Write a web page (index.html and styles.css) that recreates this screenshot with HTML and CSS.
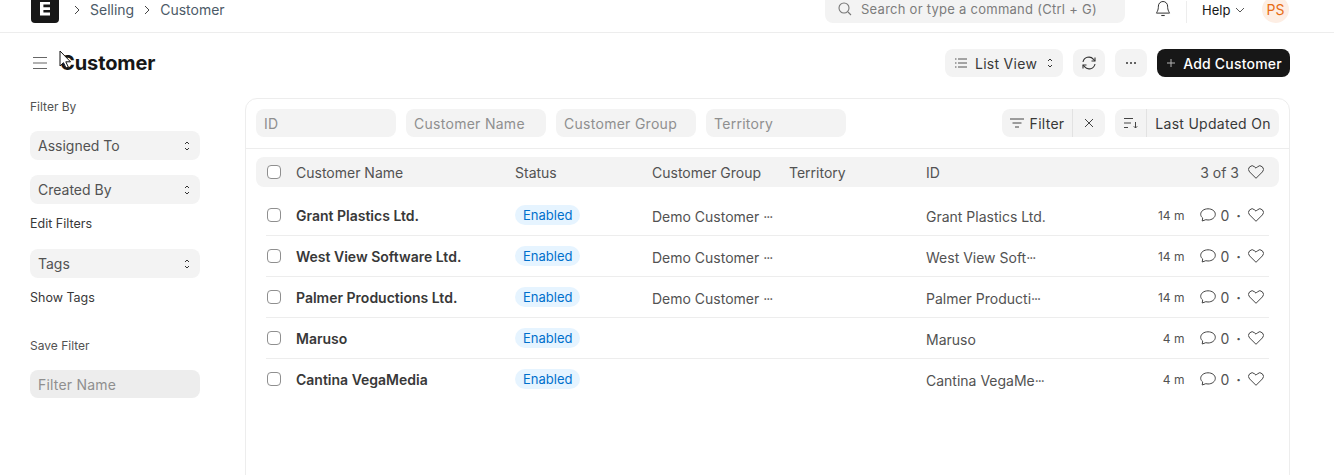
FILE: index.html
```html
<!DOCTYPE html>
<html lang="en">
<head>
<meta charset="utf-8">
<title>Customer</title>
<link rel="stylesheet" href="styles.css">
</head>
<body>
<header class="navbar">
  <div class="logo"><svg viewBox="0 0 28 28" width="28" height="28"><path d="M9 7h10v2.600h-6.600v2.600h6.600V15h-6.600v2.600H19v3H9z" fill="#fff"/></svg></div>
  <nav class="crumbs">
    <svg class="crumb-sep" viewBox="0 0 8 10" width="8" height="10"><path d="M2 1l4 4-4 4" fill="none" stroke="#444" stroke-width="1"/></svg>
    <span>Selling</span>
    <svg class="crumb-sep" viewBox="0 0 8 10" width="8" height="10"><path d="M2 1l4 4-4 4" fill="none" stroke="#444" stroke-width="1"/></svg>
    <span>Customer</span>
  </nav>
  <div class="search">
    <svg viewBox="0 0 16 16" width="16" height="16"><circle cx="7" cy="7" r="5" fill="none" stroke="#777" stroke-width="1.100"/><path d="M11 11l3 3" stroke="#777" stroke-width="1.100"/></svg>
    <span>Search or type a command (Ctrl + G)</span>
  </div>
  <svg class="bell" viewBox="0 0 16 18" width="16" height="18"><path d="M8 1.500a4.600 4.600 0 0 0-4.600 4.600c0 4.400-1.600 6-2 7h13.200c-.4-1-2-2.600-2-7A4.600 4.600 0 0 0 8 1.500z" fill="none" stroke="#333" stroke-width="1"/><path d="M6.300 15.500h3.400" stroke="#333" stroke-width="1.100"/></svg>
  <div class="vline"></div>
  <div class="help">Help <svg viewBox="0 0 10 6" width="10" height="6"><path d="M1 1l4 4 4-4" fill="none" stroke="#555" stroke-width="1"/></svg></div>
  <div class="avatar">PS</div>
</header>

<section class="page-head">
  <svg class="menu" viewBox="0 0 14 14" width="14" height="14"><path d="M0 1.500h14M0 7h14M0 12.500h14" stroke="#666" stroke-width="1.100"/></svg>
  <h1>Customer</h1>
  <div class="actions">
    <button class="btn list-view">
      <svg viewBox="0 0 12 10" width="12" height="10"><path d="M3 1h9M3 5h9M3 9h9M0 1h1.500M0 5h1.500M0 9h1.500" stroke="#555" stroke-width="1"/></svg>
      <span>List View</span>
      <svg class="stepper" viewBox="0 0 6 12" width="6" height="12"><path d="M1 4l2-2 2 2M1 8l2 2 2-2" fill="none" stroke="#333" stroke-width="1"/></svg>
    </button>
    <button class="btn icon-btn"><svg viewBox="0 0 16 16" width="16" height="16"><path d="M2 7a6 6 0 0 1 10.500-2.700L14 6M14 9a6 6 0 0 1-10.500 2.700L2 10" fill="none" stroke="#333" stroke-width="1.100"/><path d="M14 2.500V6h-3.500M2 13.500V10h3.500" fill="none" stroke="#333" stroke-width="1.100"/></svg></button>
    <button class="btn icon-btn"><svg viewBox="0 0 10 2" width="10" height="2"><circle cx="1" cy="1" r="1" fill="#333"/><circle cx="5" cy="1" r="1" fill="#333"/><circle cx="9" cy="1" r="1" fill="#333"/></svg></button>
    <button class="btn primary"><svg viewBox="0 0 8 8" width="8" height="8"><path d="M4 0v8M0 4h8" stroke="#b5b5b5" stroke-width="1"/></svg><span>Add Customer</span></button>
  </div>
</section>

<div class="layout">
  <aside class="sidebar">
    <div class="side-label first">Filter By</div>
    <div class="side-select">Assigned To <svg viewBox="0 0 6 12" width="6" height="12"><path d="M1 4l2-2 2 2M1 8l2 2 2-2" fill="none" stroke="#333" stroke-width="1"/></svg></div>
    <div class="side-select">Created By <svg viewBox="0 0 6 12" width="6" height="12"><path d="M1 4l2-2 2 2M1 8l2 2 2-2" fill="none" stroke="#333" stroke-width="1"/></svg></div>
    <div class="side-link">Edit Filters</div>
    <div class="side-select">Tags <svg viewBox="0 0 6 12" width="6" height="12"><path d="M1 4l2-2 2 2M1 8l2 2 2-2" fill="none" stroke="#333" stroke-width="1"/></svg></div>
    <div class="side-link">Show Tags</div>
    <div class="side-label save">Save Filter</div>
    <div class="side-input">Filter Name</div>
  </aside>

  <main class="card">
    <div class="filters">
      <div class="field">ID</div>
      <div class="field">Customer Name</div>
      <div class="field">Customer Group</div>
      <div class="field">Territory</div>
      <div class="tools">
        <div class="group">
          <div class="seg filter-seg"><svg viewBox="0 0 14 10" width="14" height="10"><path d="M0 1h14M2.500 5h9M5 9h4" stroke="#444" stroke-width="1"/></svg>Filter</div>
          <div class="seg x-seg"><svg viewBox="0 0 10 10" width="10" height="10"><path d="M1 1l8 8M9 1l-8 8" stroke="#444" stroke-width="1"/></svg></div>
        </div>
        <div class="group">
          <div class="seg sort-seg"><svg viewBox="0 0 14 12" width="14" height="12"><path d="M0 1.500h9M0 6h7M0 10.500h4" stroke="#444" stroke-width="1"/><path d="M11.500 5v6M9.800 9.300l1.700 1.700 1.700-1.700" fill="none" stroke="#444" stroke-width="1"/></svg></div>
          <div class="seg order-seg">Last Updated On</div>
        </div>
      </div>
    </div>

    <div class="head-row">
      <span class="check"></span>
      <span>Customer Name</span>
      <span>Status</span>
      <span>Customer Group</span>
      <span>Territory</span>
      <span>ID</span>
      <span class="meta">3 of 3 <svg class="heart" viewBox="0 0 16 14" width="16" height="14"><path d="M8 13.300L1.600 6.900a3.500 3.500 0 0 1 0-5 3.600 3.600 0 0 1 5.100 0L8 3.200l1.300-1.300a3.600 3.600 0 0 1 5.100 0 3.500 3.500 0 0 1 0 5z" fill="none" stroke="#444" stroke-width="1"/></svg></span>
    </div>

    <div class="row">
      <span class="check"></span>
      <span class="name">Grant Plastics Ltd.</span>
      <span><span class="pill">Enabled</span></span>
      <span class="cell">Demo Customer <span class="more">···</span></span>
      <span></span>
      <span class="cell">Grant Plastics Ltd.</span>
      <span class="meta"><span class="time">14 m</span><svg class="bubble" viewBox="0 0 16 14" width="16" height="14"><path d="M8 .8C3.900.8.700 3.200.700 6.300c0 1.500.8 2.800 2 3.700L2.200 13l3.600-1.300c.7.200 1.400.3 2.200.3 4.100 0 7.300-2.500 7.300-5.700S12.100.8 8 .8z" fill="none" stroke="#444" stroke-width="1"/></svg><span class="count">0</span><span class="sep">&middot;</span><svg class="heart" viewBox="0 0 16 14" width="16" height="14"><path d="M8 13.300L1.600 6.900a3.500 3.500 0 0 1 0-5 3.600 3.600 0 0 1 5.100 0L8 3.200l1.300-1.300a3.600 3.600 0 0 1 5.100 0 3.500 3.500 0 0 1 0 5z" fill="none" stroke="#444" stroke-width="1"/></svg></span>
    </div>
    <div class="row">
      <span class="check"></span>
      <span class="name">West View Software Ltd.</span>
      <span><span class="pill">Enabled</span></span>
      <span class="cell">Demo Customer <span class="more">···</span></span>
      <span></span>
      <span class="cell">West View Soft<span class="more">···</span></span>
      <span class="meta"><span class="time">14 m</span><svg class="bubble" viewBox="0 0 16 14" width="16" height="14"><path d="M8 .8C3.900.8.700 3.200.700 6.300c0 1.500.8 2.800 2 3.700L2.200 13l3.600-1.300c.7.200 1.400.3 2.200.3 4.100 0 7.300-2.500 7.300-5.700S12.100.8 8 .8z" fill="none" stroke="#444" stroke-width="1"/></svg><span class="count">0</span><span class="sep">&middot;</span><svg class="heart" viewBox="0 0 16 14" width="16" height="14"><path d="M8 13.300L1.600 6.900a3.500 3.500 0 0 1 0-5 3.600 3.600 0 0 1 5.100 0L8 3.200l1.300-1.300a3.600 3.600 0 0 1 5.100 0 3.500 3.500 0 0 1 0 5z" fill="none" stroke="#444" stroke-width="1"/></svg></span>
    </div>
    <div class="row">
      <span class="check"></span>
      <span class="name">Palmer Productions Ltd.</span>
      <span><span class="pill">Enabled</span></span>
      <span class="cell">Demo Customer <span class="more">···</span></span>
      <span></span>
      <span class="cell">Palmer Producti<span class="more">···</span></span>
      <span class="meta"><span class="time">14 m</span><svg class="bubble" viewBox="0 0 16 14" width="16" height="14"><path d="M8 .8C3.900.8.700 3.200.700 6.300c0 1.500.8 2.800 2 3.700L2.200 13l3.600-1.300c.7.200 1.400.3 2.200.3 4.100 0 7.300-2.500 7.300-5.700S12.100.8 8 .8z" fill="none" stroke="#444" stroke-width="1"/></svg><span class="count">0</span><span class="sep">&middot;</span><svg class="heart" viewBox="0 0 16 14" width="16" height="14"><path d="M8 13.300L1.600 6.900a3.500 3.500 0 0 1 0-5 3.600 3.600 0 0 1 5.100 0L8 3.200l1.300-1.300a3.600 3.600 0 0 1 5.100 0 3.500 3.500 0 0 1 0 5z" fill="none" stroke="#444" stroke-width="1"/></svg></span>
    </div>
    <div class="row">
      <span class="check"></span>
      <span class="name">Maruso</span>
      <span><span class="pill">Enabled</span></span>
      <span class="cell"></span>
      <span></span>
      <span class="cell">Maruso</span>
      <span class="meta"><span class="time">4 m</span><svg class="bubble" viewBox="0 0 16 14" width="16" height="14"><path d="M8 .8C3.900.8.700 3.200.700 6.300c0 1.500.8 2.800 2 3.700L2.200 13l3.600-1.300c.7.200 1.400.3 2.200.3 4.100 0 7.300-2.500 7.300-5.700S12.100.8 8 .8z" fill="none" stroke="#444" stroke-width="1"/></svg><span class="count">0</span><span class="sep">&middot;</span><svg class="heart" viewBox="0 0 16 14" width="16" height="14"><path d="M8 13.300L1.600 6.900a3.500 3.500 0 0 1 0-5 3.600 3.600 0 0 1 5.100 0L8 3.200l1.300-1.300a3.600 3.600 0 0 1 5.100 0 3.500 3.500 0 0 1 0 5z" fill="none" stroke="#444" stroke-width="1"/></svg></span>
    </div>
    <div class="row last">
      <span class="check"></span>
      <span class="name">Cantina VegaMedia</span>
      <span><span class="pill">Enabled</span></span>
      <span class="cell"></span>
      <span></span>
      <span class="cell">Cantina VegaMe<span class="more">···</span></span>
      <span class="meta"><span class="time">4 m</span><svg class="bubble" viewBox="0 0 16 14" width="16" height="14"><path d="M8 .8C3.900.8.700 3.200.700 6.300c0 1.500.8 2.800 2 3.700L2.200 13l3.600-1.300c.7.200 1.400.3 2.200.3 4.100 0 7.300-2.500 7.300-5.700S12.100.8 8 .8z" fill="none" stroke="#444" stroke-width="1"/></svg><span class="count">0</span><span class="sep">&middot;</span><svg class="heart" viewBox="0 0 16 14" width="16" height="14"><path d="M8 13.300L1.600 6.900a3.500 3.500 0 0 1 0-5 3.600 3.600 0 0 1 5.100 0L8 3.200l1.300-1.300a3.600 3.600 0 0 1 5.100 0 3.500 3.500 0 0 1 0 5z" fill="none" stroke="#444" stroke-width="1"/></svg></span>
    </div>
  </main>
</div>

<svg class="cursor" viewBox="0 0 12 20" width="12" height="20"><path d="M1 1v15l3.500-3.300L7 18l2.300-1-2.500-5.200H11.500z" fill="#fff" stroke="#111" stroke-width="1"/></svg>
</body>
</html>
```
FILE: styles.css
```css
* { box-sizing: border-box; }
html, body { margin: 0; height: 475px; overflow: hidden; background: #fff; }
body { font-family: Inter, "Liberation Sans", sans-serif; font-size: 14px; color: #383838; position: relative; }

.navbar { height: 33px; border-bottom: 1px solid #ededed; display: flex; align-items: flex-end; padding: 0 45px 9px 31px; overflow: hidden; }
.logo { width: 28px; height: 28px; flex: none; background: #171717; border-radius: 4px; }
.logo svg { display: block; }
.crumbs { display: flex; align-items: center; margin-left: 14px; height: 20px; color: #4c5a67; line-height: 20px; margin-bottom: 3px; }
.crumb-sep { margin-right: 9px; }
.crumbs span + .crumb-sep { margin-left: 9px; }
.search { margin-left: auto; width: 300px; height: 30px; background: #f3f3f3; border-radius: 8px; display: flex; align-items: center; gap: 8px; padding: 2px 12px 0; color: #7c7c7c; font-size: 13px; letter-spacing: .26px; }
.bell { margin-left: 30px; margin-bottom: 5px; flex: none; }
.vline { width: 1px; height: 22px; background: #ededed; margin-left: 15px; }
.help { margin-left: 15px; display: flex; align-items: center; gap: 5px; font-size: 13px; color: #171717; line-height: 18px; margin-bottom: 4px; width: 46px; }
.avatar { width: 27px; height: 27px; border-radius: 50%; background: #fdeee4; color: #e86c13; display: flex; align-items: center; justify-content: center; font-size: 14px; margin-left: 14px; flex: none; }

.page-head { display: flex; align-items: center; height: 60px; padding: 0 44px 0 33px; }
.menu { flex: none; }
h1 { margin: 0 0 0 13px; font-size: 20px; font-weight: 700; color: #171717; line-height: 28px; letter-spacing: -.1px; }
.actions { margin-left: auto; display: flex; gap: 10px; }
.btn { font: inherit; border: 0; height: 28px; border-radius: 8px; background: #f3f3f3; color: #383838; display: flex; align-items: center; justify-content: center; padding: 0; letter-spacing: .28px; }
.list-view { width: 118px; justify-content: flex-start; padding-left: 10px; gap: 8px; }
.icon-btn { width: 32px; }
.primary { width: 133px; background: #171717; color: #fff; font-weight: 500; gap: 8px; letter-spacing: .2px; padding-left: 2px; }
.stepper { margin-left: 2px; }

.layout { display: flex; align-items: flex-start; padding-left: 30px; }
.sidebar { width: 170px; flex: none; }
.side-label { font-size: 12px; line-height: 16px; color: #525252; }
.side-label.first { margin-top: 6px; margin-bottom: 16px; }
.side-label.save { margin-top: 32px; margin-bottom: 16px; }
.side-select { height: 29px; border-radius: 8px; background: #f3f3f3; display: flex; align-items: center; justify-content: space-between; padding: 0 10px 0 8px; color: #525252; margin-bottom: 15px; }
.side-select + .side-link { margin-top: -3px; }
.side-link { font-size: 12.500px; line-height: 16px; color: #383838; margin-bottom: 17px; }
.side-input { height: 28px; border-radius: 8px; background: #ededed; color: #8f8f8f; display: flex; align-items: center; padding: 0 8px; letter-spacing: .2px; }

.card { margin-left: 45px; width: 1045px; height: 400px; border: 1px solid #ededed; border-radius: 12px; padding-top: 10px; margin-top: 5px; flex: none; }
.filters { display: flex; gap: 10px; padding: 0 10px 11px; border-bottom: 1px solid #ededed; }
.field { width: 140px; height: 28px; border-radius: 8px; background: #f3f3f3; color: #8f8f8f; display: flex; align-items: center; padding: 0 8px; letter-spacing: .28px; }
.tools { margin-left: auto; display: flex; gap: 10px; }
.group { display: flex; height: 28px; border-radius: 8px; background: #f3f3f3; color: #383838; letter-spacing: .28px; }
.seg { display: flex; align-items: center; justify-content: center; height: 100%; }
.seg + .seg { border-left: 1px solid #e2e2e2; }
.filter-seg { width: 70px; gap: 6px; }
.x-seg { width: 33px; }
.sort-seg { width: 31px; }
.order-seg { width: 133px; }

.head-row, .row { display: grid; grid-template-columns: 30px 219px 137px 137px 137px 137px 1fr; align-items: center; }
.head-row { height: 30px; margin: 8px 10px 0; padding: 0 10px; background: #f3f3f3; border-radius: 8px; color: #525252; }
.row { height: 41px; margin: 0 20px; border-bottom: 1px solid #ededed; }
.head-row + .row { margin-top: 8px; }
.row.last { border-bottom-color: transparent; }
.check { width: 14px; height: 14px; border: 1px solid #8f8f8f; border-radius: 4px; background: #fff; margin: 0 0 1px 1px; }
.name { font-weight: 600; color: #383838; }
.pill { display: inline-flex; align-items: center; height: 20px; padding: 0 8px; border-radius: 10px; background: #e6f4ff; color: #0070cc; font-size: 13px; }
.cell { color: #525252; white-space: nowrap; padding-top: 2px; }
.more { letter-spacing: -1px; }
.meta { display: flex; align-items: center; justify-content: flex-end; padding-right: 5px; color: #525252; white-space: nowrap; }
.head-row .meta { padding-right: 5px; gap: 9px; }
.time { font-size: 12px; margin-right: 16px; padding-top: 1px; }
.bubble { flex: none; }
.count { margin-left: 4px; }
.sep { margin: 0 7px; font-weight: 700; }
.heart { flex: none; }

.cursor { position: absolute; left: 59px; top: 50px; }
```
